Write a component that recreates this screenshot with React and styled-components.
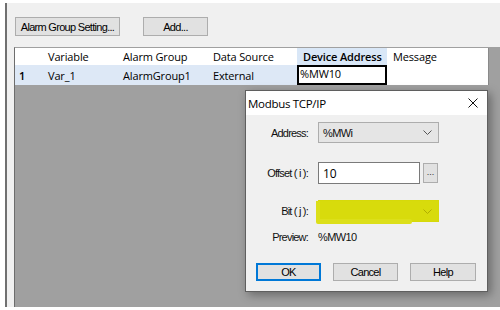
import React from "react";
import styled, { createGlobalStyle } from "styled-components";

const Global = createGlobalStyle`
  html, body { margin: 0; padding: 0; background: #fff; }
  #root { width: 500px; height: 310px; overflow: hidden; }
`;

const Page = styled.div`
  width: 500px;
  height: 310px;
  display: flex;
  flex-direction: column;
  background: #fff;
  overflow: hidden;
`;

const Strip = styled.div`
  height: 3px;
  flex: none;
  background: #fff;
`;

const Window = styled.div`
  flex: 1;
  min-height: 0;
  margin-left: 5px;
  border-left: 2px solid #707070;
  background: #f0f0f0;
  display: flex;
  flex-direction: column;
`;

const Toolbar = styled.div`
  flex: none;
  height: 44px;
  box-sizing: border-box;
  padding: 14px 0 0 8px;
  display: flex;
  align-items: flex-start;
  gap: 23px;
`;

const WinButton = styled.div`
  width: ${(p) => p.$w}px;
  height: ${(p) => p.$h || 19}px;
  box-sizing: border-box;
  border: 1px solid ${(p) => (p.$default ? "#0078d7" : "#adadad")};
  box-shadow: ${(p) => (p.$default ? "inset 0 0 0 1px #0078d7" : "none")};
  background: #e1e1e1;
  display: flex;
  align-items: center;
  justify-content: center;
  font: 11px "Liberation Sans", Arial, sans-serif;
  letter-spacing: -0.7px;
  color: #000;
`;

const GridArea = styled.div`
  flex: 1;
  min-height: 0;
  margin-left: 7px;
  border-left: 1px solid #6d6d6d;
  border-top: 1px solid #a0a0a0;
  background: #a0a0a0;
  position: relative;
`;

const GridRow = styled.div`
  display: grid;
  grid-template-columns: 27px 75px 90px 90px 90px 101px;
  width: 474px;
  box-sizing: border-box;
  height: ${(p) => p.$h}px;
  border-right: 1px solid #8a8a8a;
`;

const Cell = styled.div`
  display: flex;
  align-items: center;
  box-sizing: border-box;
  padding-left: ${(p) => (p.$rowHead ? 4 : 6)}px;
  background: ${(p) => p.$bg || "#fff"};
  font: ${(p) => (p.$bold ? 600 : 400)} 11px "Open Sans", sans-serif;
  letter-spacing: -0.15px;
  color: #000;
  white-space: nowrap;
  overflow: hidden;
`;

const EditCell = styled(Cell)`
  border: 2px solid #000;
  padding-left: 1px;
  padding-bottom: 3px;
`;

const Dialog = styled.div`
  position: absolute;
  left: 230px;
  top: 42px;
  width: 243px;
  height: 202px;
  box-sizing: border-box;
  border: 1px solid #5f5f5f;
  background: #f0f0f0;
  box-shadow: 3px 3px 9px rgba(0, 0, 0, 0.35);
  display: flex;
  flex-direction: column;
`;

const TitleBar = styled.div`
  flex: none;
  height: 24px;
  background: #fff;
  display: flex;
  align-items: center;
  justify-content: space-between;
  padding: 0 9px 0 2px;
  font: 11.5px "Open Sans", sans-serif;
  letter-spacing: -0.3px;
  color: #000;
`;

const Body = styled.div`
  flex: 1;
  display: flex;
  flex-direction: column;
  padding-top: 7px;
`;

const FieldRow = styled.div`
  display: grid;
  grid-template-columns: 62px auto;
  column-gap: 10px;
  align-items: center;
  height: ${(p) => p.$h}px;
  margin-top: ${(p) => p.$mt || 0}px;
`;

const Label = styled.div`
  text-align: right;
  font: 11px "Liberation Sans", Arial, sans-serif;
  letter-spacing: -0.8px;
  color: #111;
  white-space: nowrap;
`;

const Value = styled.div`
  font: 11px "Liberation Sans", Arial, sans-serif;
  letter-spacing: -0.6px;
  color: #111;
`;

const Combo = styled.div`
  position: relative;
  width: 121px;
  height: ${(p) => p.$h}px;
  box-sizing: border-box;
  border: 1px solid ${(p) => (p.$marked ? "#d6d90a" : "#adadad")};
  background: ${(p) => (p.$marked ? "#d8db0c" : "#e5e5e5")};
  display: flex;
  align-items: center;
  justify-content: space-between;
  padding: 0 6px 0 4px;
  font: 11px "Liberation Sans", Arial, sans-serif;
  letter-spacing: -0.6px;
  color: #111;
  ${(p) =>
    p.$marked &&
    `
    &::after {
      content: "";
      position: absolute;
      left: -3px;
      bottom: -3px;
      width: 96px;
      height: 5px;
      background: #dcdf1a;
      border-radius: 2px;
    }
    &::before {
      content: "";
      position: absolute;
      left: -3px;
      top: 0;
      width: 4px;
      height: 100%;
      background: #dcdf1a;
    }
  `}
`;

const InputLine = styled.div`
  display: flex;
  align-items: center;
  gap: 3px;
`;

const TextBox = styled.div`
  width: 102px;
  height: 22px;
  box-sizing: border-box;
  border: 1px solid #7a7a7a;
  background: #fff;
  display: flex;
  align-items: center;
  padding-left: 4px;
  font: 12px "Open Sans", sans-serif;
  color: #000;
`;

const Browse = styled.div`
  width: 15px;
  height: 20px;
  box-sizing: border-box;
  border: 1px solid #adadad;
  background: #e1e1e1;
  display: flex;
  align-items: flex-end;
  justify-content: center;
  padding-bottom: 5px;
  font: 9px "Liberation Sans", Arial, sans-serif;
  color: #333;
`;

const ButtonRow = styled.div`
  display: flex;
  gap: 12px;
  padding-left: 10px;
  margin-top: 19px;
`;

const Chevron = ({ color = "#555" }) => (
  <svg width="9" height="5" viewBox="0 0 9 5">
    <path d="M0.5 0.5 L4.5 4.5 L8.5 0.5" fill="none" stroke={color} strokeWidth="1" />
  </svg>
);

const CloseIcon = () => (
  <svg width="10" height="10" viewBox="0 0 10 10">
    <path d="M0.5 0.5 L9.5 9.5 M9.5 0.5 L0.5 9.5" stroke="#111" strokeWidth="1" />
  </svg>
);

const ROW_BG = "#dde8f6";
const HEAD_SEL = "#d9e7f7";

export default function App() {
  return (
    <>
      <Global />
      <Page>
        <Strip />
        <Window>
          <Toolbar>
            <WinButton $w={105}>Alarm Group Setting...</WinButton>
            <WinButton $w={65}>Add...</WinButton>
          </Toolbar>
          <GridArea>
            <GridRow $h={17}>
              <Cell $rowHead />
              <Cell>Variable</Cell>
              <Cell>Alarm Group</Cell>
              <Cell>Data Source</Cell>
              <Cell $bold $bg={HEAD_SEL}>Device Address</Cell>
              <Cell>Message</Cell>
            </GridRow>
            <GridRow $h={20}>
              <Cell $rowHead $bold $bg={ROW_BG}>1</Cell>
              <Cell $bg={ROW_BG}>Var_1</Cell>
              <Cell $bg={ROW_BG}>AlarmGroup1</Cell>
              <Cell $bg={ROW_BG}>External</Cell>
              <EditCell>%MW10</EditCell>
              <Cell />
            </GridRow>

            <Dialog>
              <TitleBar>
                <span>Modbus TCP/IP</span>
                <CloseIcon />
              </TitleBar>
              <Body>
                <FieldRow $h={21}>
                  <Label>Address:</Label>
                  <Combo $h={21}>
                    <span>%MWi</span>
                    <Chevron />
                  </Combo>
                </FieldRow>
                <FieldRow $h={22} $mt={19}>
                  <Label>Offset ( i ):</Label>
                  <InputLine>
                    <TextBox>10</TextBox>
                    <Browse>...</Browse>
                  </InputLine>
                </FieldRow>
                <FieldRow $h={22} $mt={16}>
                  <Label>Bit ( j ):</Label>
                  <Combo $h={22} $marked>
                    <span />
                    <Chevron color="#b0ad00" />
                  </Combo>
                </FieldRow>
                <FieldRow $h={14} $mt={8}>
                  <Label>Preview:</Label>
                  <Value>%MW10</Value>
                </FieldRow>
                <ButtonRow>
                  <WinButton $w={65} $h={18} $default>OK</WinButton>
                  <WinButton $w={65} $h={18}>Cancel</WinButton>
                  <WinButton $w={66} $h={18}>Help</WinButton>
                </ButtonRow>
              </Body>
            </Dialog>
          </GridArea>
        </Window>
        <Strip />
      </Page>
    </>
  );
}
